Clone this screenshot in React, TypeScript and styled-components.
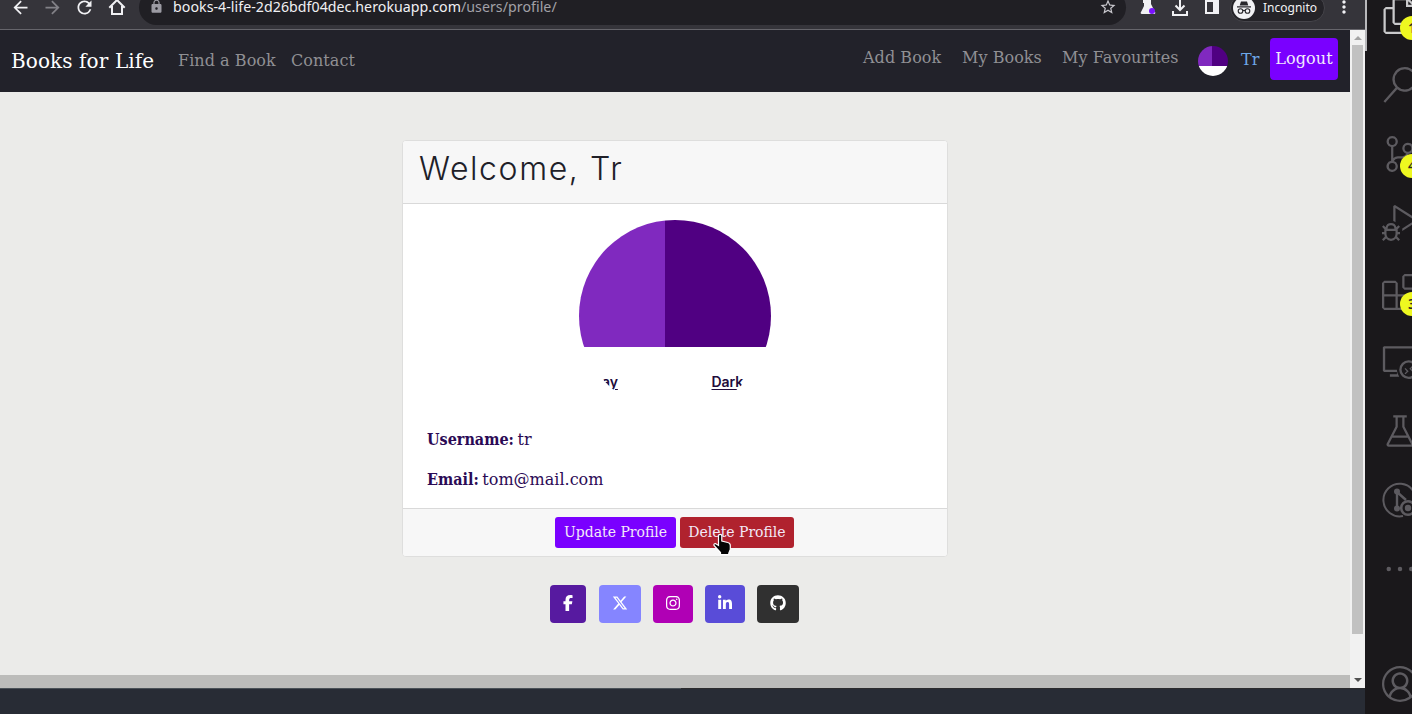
import React from 'react';
import styled, { createGlobalStyle } from 'styled-components';
import {
  VscFiles, VscSearch, VscSourceControl, VscDebugAlt, VscExtensions,
  VscRemoteExplorer, VscBeaker, VscEllipsis, VscAccount,
} from 'react-icons/vsc';
import { FaFacebookF, FaInstagram, FaLinkedinIn, FaGithub, FaXTwitter } from 'react-icons/fa6';
import { MdArrowBack, MdArrowForward, MdRefresh, MdLock, MdStarBorder, MdMoreVert } from 'react-icons/md';

const GlobalStyle = createGlobalStyle`
  * { box-sizing: border-box; }
  body { margin: 0; overflow: hidden; background: #1a181b; }
  svg { display: block; flex: none; }
`;

const serif = "'DejaVu Serif', serif";
const serifCondensed = "'DejaVu Serif Condensed', 'DejaVu Serif', serif";

const Screen = styled.div`
  display: flex;
  width: 1412px;
  height: 714px;
  overflow: hidden;
`;

const Browser = styled.div`
  display: flex;
  flex-direction: column;
  width: 1365px;
  flex: none;
`;

/* Browser chrome */
const Toolbar = styled.div`
  height: 30px;
  flex: none;
  overflow: hidden;
  background: #35343a;
  border-bottom: 1px solid #66656b;
`;

const ToolbarRow = styled.div`
  display: flex;
  align-items: center;
  height: 35px;
  margin-top: -10px;
  color: #f1f1f4;
`;

const ToolIcon = styled.div<{ $w: number; $dim?: boolean }>`
  display: flex;
  justify-content: center;
  width: ${p => p.$w}px;
  flex: none;
  padding-bottom: 1px;
  color: ${p => (p.$dim ? '#828187' : '#f1f1f4')};
`;

const AddressBar = styled.div`
  display: flex;
  align-items: center;
  width: 987px;
  height: 35px;
  margin-left: 11px;
  padding: 0 9px 2px 10px;
  border-radius: 18px;
  background: #201f24;
`;

const Url = styled.div`
  flex: 1;
  margin-left: 9px;
  padding-top: 1px;
  white-space: nowrap;
  font: 14.2px/20px 'Noto Sans', sans-serif;
  letter-spacing: 0.04px;
  color: #f0f0f3;
  span { color: #a2a1a7; }
`;

const Incognito = styled.div`
  display: flex;
  align-items: center;
  gap: 8px;
  width: 95px;
  height: 28px;
  margin: 0 0 0 -3px;
  padding-left: 2px;
  border: 1px solid #45444a;
  border-radius: 14px;
  background: #242328;
  font: 12px/16px 'Noto Sans', sans-serif;
`;

/* Page viewport */
const Viewport = styled.div`
  display: flex;
  height: 658px;
  flex: none;
`;

const PageColumn = styled.div`
  display: flex;
  flex-direction: column;
  width: 1350px;
  background: #ebebe9;
`;

const HorizontalBar = styled.div`
  height: 13px;
  margin-top: auto;
  background: #bcbcba;
`;

const VerticalBar = styled.div`
  display: flex;
  flex-direction: column;
  align-items: center;
  justify-content: space-between;
  width: 15px;
  padding: 5px 0 6px;
  background: #f1f1f1;
`;

const Thumb = styled.div`
  width: 11px;
  height: 589px;
  margin: 5px 0 auto;
  background: #c1c1c1;
`;

const Arrow = styled.div<{ $down?: boolean }>`
  border: 4px solid transparent;
  ${p => (p.$down ? 'border-top-color: #505050; border-bottom: 0;' : 'border-bottom-color: #a3a3a3; border-top: 0;')}
  margin-top: ${p => (p.$down ? 0 : 1)}px;
`;

const Desktop = styled.div`
  flex: 1;
  background: #282c35;
`;

const DesktopEdge = styled.div`
  height: 1px;
  background: linear-gradient(to right, #4a5157 681px, #2c2c2e 681px);
`;

/* Site navigation */
const Navbar = styled.nav`
  display: flex;
  align-items: center;
  height: 62px;
  padding: 0 12px 4px 11px;
  background: #22222a;
  font-family: ${serif};
`;

const Brand = styled.div`
  width: 167px;
  margin-top: 4px;
  white-space: nowrap;
  font-size: 20px;
  letter-spacing: 0.1px;
  color: #fff;
`;

const NavLink = styled.div<{ $w: number; $drop?: number; $blue?: boolean }>`
  width: ${p => p.$w}px;
  white-space: nowrap;
  font-size: 16px;
  line-height: 24px;
  letter-spacing: 0.05px;
  margin-top: ${p => p.$drop ?? -3}px;
  color: ${p => (p.$blue ? '#6ea8e8' : '#909094')};
`;

const NavRight = styled.div`
  display: flex;
  align-items: center;
  height: 42px;
  margin-left: auto;
`;

const LogoutButton = styled.div`
  display: flex;
  align-items: center;
  justify-content: center;
  width: 68px;
  height: 42px;
  padding-bottom: 1px;
  border-radius: 4px;
  background: #7a00ff;
  color: #f2eafd;
  font-size: 16px;
  letter-spacing: 0.1px;
`;

const Avatar = styled.div<{ $size: number; $split: number; $cut: number }>`
  width: ${p => p.$size}px;
  height: ${p => p.$size}px;
  flex: none;
  overflow: hidden;
  border-radius: 50%;
  background:
    linear-gradient(to right, #8029bf ${p => p.$split}px, #500082 ${p => p.$split}px) 0 0 / 100% ${p => p.$cut}px no-repeat,
    #fff;
`;

const NavAvatar = styled(Avatar)`
  margin: 4px 13px 0 0;
`;

/* Profile card */
const Main = styled.main`
  display: flex;
  flex-direction: column;
  align-items: center;
  padding-top: 48px;
`;

const Card = styled.section`
  width: 546px;
  height: 417px;
  overflow: hidden;
  border: 1px solid #dededd;
  border-radius: 4px;
  background: #fff;
  font-family: ${serif};
`;

const CardHeader = styled.header`
  height: 63px;
  padding: 8px 16px;
  border-bottom: 1px solid #d9d9d9;
  background: #f7f7f7;
`;

const Title = styled.h1`
  margin: 0;
  font: 300 32px/39px Inter, sans-serif;
  letter-spacing: 1.6px;
  color: #202028;
  white-space: nowrap;
`;

const CardBody = styled.div`
  display: flex;
  flex-direction: column;
  align-items: center;
  height: 304px;
  padding: 16px 24px 0;
`;

const AvatarCaption = styled.div`
  display: flex;
  justify-content: space-between;
  padding: 153px 28px 0 23px;
  font: 600 14px/17px Inter, sans-serif;
  letter-spacing: -0.1px;
  color: #210b3c;
  text-decoration: underline;
  text-underline-offset: 2px;
`;

const Field = styled.p`
  align-self: stretch;
  margin: 0 0 16px;
  font-size: 16px;
  line-height: 24px;
  color: #2b0a55;
`;

const FieldLabel = styled.strong`
  margin-right: -1.5px;
  font-family: ${serifCondensed};
  font-stretch: condensed;
`;

const FirstField = styled(Field)`
  margin-top: 16px;
`;

const CardFooter = styled.footer`
  display: flex;
  justify-content: center;
  gap: 4px;
  height: 48px;
  padding: 8px 2px 0 0;
  border-top: 1px solid #d9d9d9;
  background: #f7f7f7;
`;

const ActionButton = styled.div<{ $w: number; $danger?: boolean }>`
  width: ${p => p.$w}px;
  height: 31px;
  padding-left: 1px;
  border-radius: 3px;
  background: ${p => (p.$danger ? '#b0222e' : '#7a00ff')};
  color: #f3e9f8;
  text-align: center;
  white-space: nowrap;
  font-size: 14px;
  line-height: 30px;
  position: relative;
`;

const Cursor = styled.svg`
  position: absolute;
  left: 32px;
  top: 16px;
`;

const Socials = styled.div`
  display: flex;
  gap: 12px;
  margin: 28px 0 0 -1px;
`;

const SocialButton = styled.div<{ $w: number; $bg: string }>`
  display: flex;
  align-items: center;
  justify-content: center;
  width: ${p => p.$w}px;
  height: 38px;
  padding-bottom: 2px;
  border-radius: 4px;
  background: ${p => p.$bg};
  color: #fff;
  &:first-child { margin-right: 1px; }
`;

/* Editor activity bar */
const ActivityBar = styled.aside`
  display: flex;
  flex-direction: column;
  width: 47px;
  height: 714px;
  padding: 0 0 12px 17px;
  overflow: hidden;
  background: linear-gradient(#b8b8bb, #b8b8bb) 0 0 / 2px 51px no-repeat, #1a181b;
`;

const Activity = styled.div<{ $active?: boolean; $last?: boolean }>`
  position: relative;
  width: 36px;
  height: 36px;
  flex: none;
  margin-top: ${p => (p.$active ? '-2px' : p.$last ? 'auto' : '33.1px')};
  color: ${p => (p.$active ? '#c9c9cb' : '#5d5b60')};
`;

const Badge = styled.div`
  position: absolute;
  left: 18px;
  top: 18px;
  width: 24px;
  height: 24px;
  border-radius: 50%;
  background: #eef820;
  color: #2d2a20;
  text-align: center;
  font: 600 14px/24px 'Noto Sans', sans-serif;
`;

const activities = [
  { icon: VscFiles, badge: '1' },
  { icon: VscSearch },
  { icon: VscSourceControl, badge: '4' },
  { icon: VscDebugAlt },
  { icon: VscExtensions, badge: '3' },
  { icon: VscRemoteExplorer },
  { icon: VscBeaker },
  { icon: GitLensIcon },
  { icon: VscEllipsis },
];

function GitLensIcon({ size }: { size: number }) {
  return (
    <svg width={size} height={size} viewBox="0 0 36 36" fill="none" stroke="currentColor" strokeWidth="2">
      <path d="M21 34A16.3 16.3 0 1 1 33.5 22" />
      <path d="M15 10v17M15 10l9 8" strokeWidth="2.4" />
      <circle cx="15" cy="9.500" r="3" fill="currentColor" stroke="none" />
      <circle cx="15" cy="26.500" r="3" fill="currentColor" stroke="none" />
      <circle cx="26" cy="26" r="6.800" strokeWidth="2.600" />
      <circle cx="26" cy="26" r="3.200" fill="currentColor" stroke="none" />
    </svg>
  );
}

function HomeIcon() {
  return (
    <svg width="18" height="18" viewBox="0 0 18 18" fill="none" stroke="currentColor" strokeWidth="2">
      <path d="M1.300 9.700 9 2l7.700 7.700M4 8v8h10V8" />
    </svg>
  );
}

function FlaskExtensionIcon() {
  return (
    <svg width="16" height="20" viewBox="0 0 16 20">
      <path d="M3 0h8v7l4 8q1 2-1 2H2q-2 0-1-2l3-6V6H3z" fill="#f1f1f4" />
      <circle cx="12" cy="14" r="3" fill="#7a12ff" />
    </svg>
  );
}

function DownloadIcon() {
  return (
    <svg width="16" height="18" viewBox="0 0 16 18" fill="none" stroke="currentColor" strokeWidth="2">
      <path d="M8 1v11M3.500 7.500 8 12l4.500-4.500M1 13v4h14v-4" />
    </svg>
  );
}

function PanelIcon() {
  return (
    <svg width="14" height="14" viewBox="0 0 14 14">
      <path d="M0 0h14v14H0zM2 2v10h6V2z" fill="currentColor" fillRule="evenodd" />
    </svg>
  );
}

function IncognitoIcon() {
  return (
    <svg width="22" height="22" viewBox="0 0 22 22">
      <circle cx="11" cy="11" r="11" fill="#f1f1f4" />
      <path d="M8 4.500h6l1.300 4H6.700zM4 9.300h14v1.200H4z" fill="#28272c" />
      <g fill="none" stroke="#28272c" strokeWidth="1.100">
        <circle cx="7.500" cy="14" r="2.300" />
        <circle cx="14.500" cy="14" r="2.300" />
        <path d="M9.800 13.700q1.200-.7 2.400 0" />
      </g>
    </svg>
  );
}

export default function App() {
  return (
    <>
      <GlobalStyle />
      <Screen>
        <Browser>
          <Toolbar>
            <ToolbarRow>
              <ToolIcon $w={41}><MdArrowBack size={21} /></ToolIcon>
              <ToolIcon $w={23} $dim><MdArrowForward size={21} /></ToolIcon>
              <ToolIcon $w={41}><MdRefresh size={21} /></ToolIcon>
              <ToolIcon $w={23}><HomeIcon /></ToolIcon>
              <AddressBar>
                <MdLock size={15} color="#9c9ba3" />
                <Url>books-4-life-2d26bdf04dec.herokuapp.com<span>/users/profile/</span></Url>
                <MdStarBorder size={18} color="#c9c8ce" />
              </AddressBar>
              <ToolIcon $w={44}><FlaskExtensionIcon /></ToolIcon>
              <ToolIcon $w={20}><DownloadIcon /></ToolIcon>
              <ToolIcon $w={43}><PanelIcon /></ToolIcon>
              <Incognito><IncognitoIcon />Incognito</Incognito>
              <ToolIcon $w={37}><MdMoreVert size={20} /></ToolIcon>
            </ToolbarRow>
          </Toolbar>

          <Viewport>
            <PageColumn>
              <Navbar>
                <Brand>Books for Life</Brand>
                <NavLink $w={113} $drop={4}>Find a Book</NavLink>
                <NavLink $w={70} $drop={4}>Contact</NavLink>
                <NavRight>
                  <NavLink $w={99}>Add Book</NavLink>
                  <NavLink $w={100}>My Books</NavLink>
                  <NavLink $w={136}>My Favourites</NavLink>
                  <NavAvatar $size={30} $split={14} $cut={20} />
                  <NavLink $w={29} $drop={1} $blue>Tr</NavLink>
                  <LogoutButton>Logout</LogoutButton>
                </NavRight>
              </Navbar>

              <Main>
                <Card>
                  <CardHeader><Title>Welcome, Tr</Title></CardHeader>
                  <CardBody>
                    <Avatar $size={192} $split={86} $cut={127}>
                      <AvatarCaption><span>ay</span><span>Dark</span></AvatarCaption>
                    </Avatar>
                    <FirstField><FieldLabel>Username:</FieldLabel> tr</FirstField>
                    <Field><FieldLabel>Email:</FieldLabel> tom@mail.com</Field>
                  </CardBody>
                  <CardFooter>
                    <ActionButton $w={121}>Update Profile</ActionButton>
                    <ActionButton $w={114} $danger>
                      Delete Profile
                      <Cursor width="20" height="23" viewBox="0 0 20 23">
                        <path
                          d="M7.500 1.500Q9.500 1 9.800 3v5l6 1.500q2.500.5 2.500 3v4l-1.500 3.500v1.500H8.500v-2L2 12.500q-.5-2 1.500-2l3 2V3q0-1 1-1.500z"
                          fill="#050505" stroke="#fff" strokeWidth="1.200"
                        />
                      </Cursor>
                    </ActionButton>
                  </CardFooter>
                </Card>

                <Socials>
                  <SocialButton $w={36} $bg="#571aa0"><FaFacebookF size={16} /></SocialButton>
                  <SocialButton $w={42} $bg="#8585ff"><FaXTwitter size={16} /></SocialButton>
                  <SocialButton $w={40} $bg="#b000b5"><FaInstagram size={16} /></SocialButton>
                  <SocialButton $w={40} $bg="#594cd8"><FaLinkedinIn size={16} /></SocialButton>
                  <SocialButton $w={42} $bg="#303030"><FaGithub size={16} /></SocialButton>
                </Socials>
              </Main>
              <HorizontalBar />
            </PageColumn>
            <VerticalBar>
              <Arrow />
              <Thumb />
              <Arrow $down />
            </VerticalBar>
          </Viewport>

          <Desktop><DesktopEdge /></Desktop>
        </Browser>

        <ActivityBar>
          {activities.map(({ icon: Icon, badge }, i) => (
            <Activity key={i} $active={i === 0}>
              <Icon size={36} />
              {badge && <Badge>{badge}</Badge>}
            </Activity>
          ))}
          <Activity $last><VscAccount size={36} /></Activity>
        </ActivityBar>
      </Screen>
    </>
  );
}
